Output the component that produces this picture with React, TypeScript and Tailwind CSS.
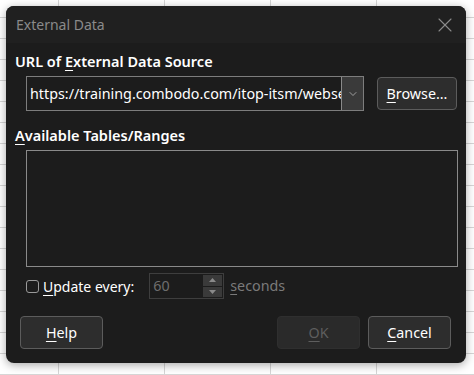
import { X, ChevronDown } from 'lucide-react'

function Btn({ mnemonic, rest, disabled, w = 'w-[83px]' }: { mnemonic: string; rest: string; disabled?: boolean; w?: string }) {
  return (
    <button
      className={
        disabled
          ? `${w} h-[33px] rounded-[4px] bg-[#2a2a2a] border border-[#2f2f2f] text-[#5e5e5e] text-[14.3px] whitespace-nowrap`
          : `${w} h-[33px] rounded-[4px] bg-[#2d2d2d] border border-[#5c5c5c] text-white text-[14.3px] whitespace-nowrap`
      }
    >
      <span className="underline underline-offset-[3px]">{mnemonic}</span>
      {rest}
    </button>
  )
}

export default function App() {
  return (
    <div className="w-[474px] h-[375px] overflow-hidden bg-white bg-[linear-gradient(to_right,#d6d6d6_1px,transparent_1px),linear-gradient(to_bottom,#d6d6d6_1px,transparent_1px)] bg-[size:106px_21px] bg-[position:58px_17px] pt-[6px] pl-[6px] font-['Noto_Sans',sans-serif]">
      <div className="w-[460px] h-[357px] rounded-[8px] bg-[#1c1c1c] overflow-hidden shadow-[0_2px_10px_rgba(0,0,0,0.35)] flex flex-col">
        {/* Title bar */}
        <div className="h-[37px] bg-[#202020] flex items-center justify-between pl-[10px] pr-[9px] flex-shrink-0">
          <span className="text-[14px] text-[#8a8a8a]">External Data</span>
          <X size={24} strokeWidth={1.1} className="text-[#8a8a8a]" />
        </div>

        <div className="flex flex-col pl-[9px] pr-[9px]">
          <div className="mt-[8px] text-[14.5px] font-semibold text-white leading-[20px]">
            URL of <span className="underline underline-offset-[3px]">E</span>xternal Data Source
          </div>

          <div className="flex items-center mt-[5px]">
            <div className="ml-[11px] w-[338px] h-[35px] border border-[#7d7d7d] bg-[#1c1c1c] flex">
              <div className="flex-1 overflow-hidden whitespace-nowrap pl-[3px] text-[14.3px] text-white leading-[33px]">
                https://training.combodo.com/itop-itsm/webservices/export-v2.php
              </div>
              <div className="w-[22px] h-full bg-[#3a3a3a] border-l border-[#8a8a8a] flex items-center justify-center">
                <ChevronDown size={12} strokeWidth={1.5} className="text-[#bdbdbd]" />
              </div>
            </div>
            <div className="ml-[13px]">
              <Btn mnemonic="B" rest="rowse..." w="w-[80px]" />
            </div>
          </div>

          <div className="mt-[14px] text-[14.5px] font-semibold text-white leading-[20px]">
            <span className="underline underline-offset-[3px]">A</span>vailable Tables/Ranges
          </div>

          <div className="ml-[11px] mt-[5px] w-[432px] h-[117px] border border-[#8a8a8a] bg-[#1c1c1c]" />

          <div className="flex items-center ml-[11px] mt-[6px] h-[26px]">
            <div className="w-[13px] h-[13px] rounded-[3px] border border-[#9a9a9a]" />
            <span className="ml-[4px] text-[14px] text-white">
              <span className="underline underline-offset-[3px]">U</span>pdate every:
            </span>
            <div className="ml-[15px] w-[75px] h-[26px] border border-[#3e3e3e] flex items-center justify-between">
              <span className="pl-[3px] text-[14.3px] text-[#6e6e6e]">60</span>
              <div className="mr-[1px] w-[19px] h-[22px] flex flex-col gap-[1px]">
                <div className="flex-1 bg-[#3a3a3a] flex items-center justify-center">
                  <svg width="7" height="4" viewBox="0 0 7 4"><path d="M0 4 L3.5 0 L7 4 Z" fill="#8a8a8a" /></svg>
                </div>
                <div className="flex-1 bg-[#3a3a3a] flex items-center justify-center">
                  <svg width="7" height="4" viewBox="0 0 7 4"><path d="M0 0 L3.5 4 L7 0 Z" fill="#8a8a8a" /></svg>
                </div>
              </div>
            </div>
            <span className="ml-[6px] text-[14.3px] text-[#7a7a7a]">
              <span className="underline underline-offset-[3px]">s</span>econds
            </span>
          </div>

          <div className="flex mt-[17px] ml-[5px]">
            <Btn mnemonic="H" rest="elp" />
            <div className="ml-auto flex gap-[8px] mr-[6px]">
              <Btn mnemonic="O" rest="K" disabled />
              <Btn mnemonic="C" rest="ancel" />
            </div>
          </div>
        </div>
      </div>
    </div>
  )
}
